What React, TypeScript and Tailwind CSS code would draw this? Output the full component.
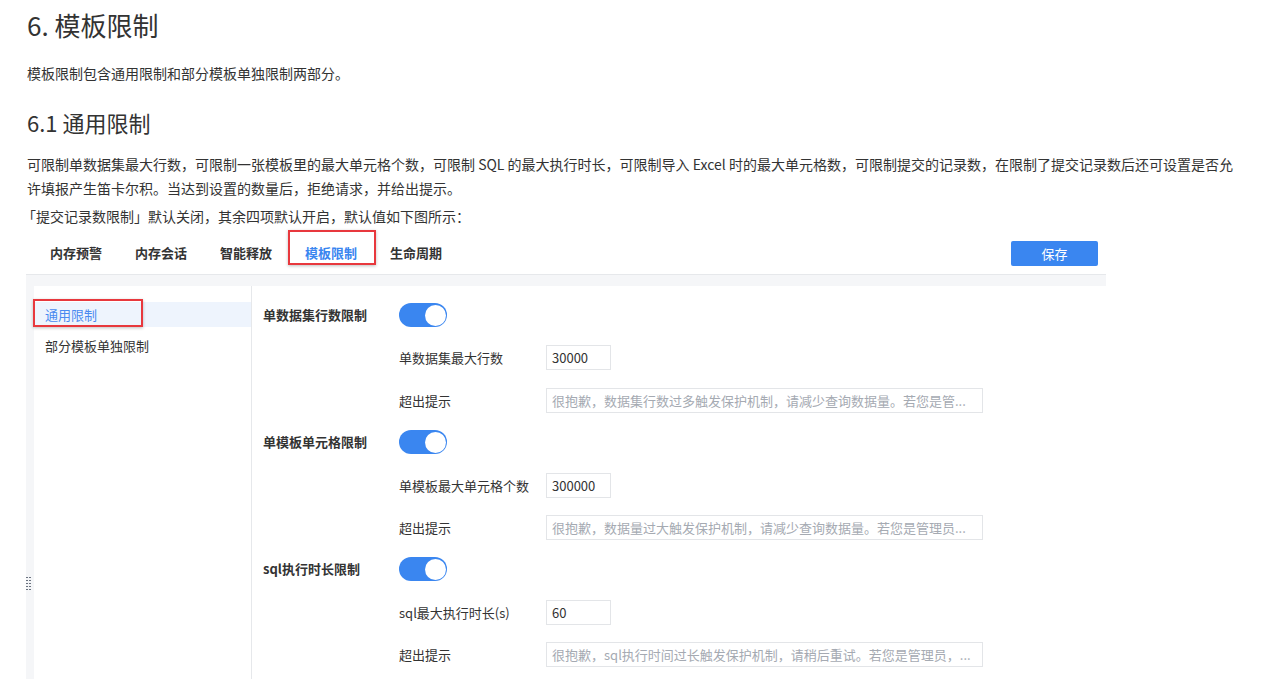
import React from 'react';

const font = "font-['Noto_Sans_CJK_SC','Noto_Sans',sans-serif]";

interface Group {
  title: string;
  label: string;
  value: string;
  tip: string;
}

const groups: Group[] = [
  {
    title: '单数据集行数限制',
    label: '单数据集最大行数',
    value: '30000',
    tip: '很抱歉，数据集行数过多触发保护机制，请减少查询数据量。若您是管...',
  },
  {
    title: '单模板单元格限制',
    label: '单模板最大单元格个数',
    value: '300000',
    tip: '很抱歉，数据量过大触发保护机制，请减少查询数据量。若您是管理员...',
  },
  {
    title: 'sql执行时长限制',
    label: 'sql最大执行时长(s)',
    value: '60',
    tip: '很抱歉，sql执行时间过长触发保护机制，请稍后重试。若您是管理员，...',
  },
];

const Toggle = () => (
  <div className="relative w-[48px] h-[24px] rounded-full bg-[#3a86f0]">
    <div className="absolute right-[1px] top-[1.5px] w-[21px] h-[21px] rounded-full bg-white" />
  </div>
);

const RedBox = ({ className }: { className: string }) => (
  <div
    className={`absolute border-2 border-[#e8383d] shadow-[0_1px_3px_rgba(0,0,0,0.25)] pointer-events-none ${className}`}
  />
);

const tabs = ['内存预警', '内存会话', '智能释放', '模板限制', '生命周期'];

const SettingsShot = () => (
  <div className="ml-[26px] w-[1080px] bg-[#f5f6f8]">
    {/* tab bar */}
    <div className="h-[40px] bg-white border-b border-[#e6e8eb] flex items-center pl-[24px] pr-[8px] pb-[3px]">
      {tabs.map((t) => (
        <div
          key={t}
          className={`relative mr-[33px] text-[13px] font-bold leading-[20px] ${
            t === '模板限制' ? 'text-[#3a86f0]' : 'text-[#333]'
          }`}
        >
          {t}
          {t === '模板限制' && <RedBox className="-left-[17px] -top-[13px] w-[88px] h-[35px]" />}
        </div>
      ))}
      <button className="ml-auto w-[87px] h-[25px] rounded-[2px] bg-[#3a86f0] text-white text-[13px] leading-[25px]">
        保存
      </button>
    </div>

    <div className="flex pt-[11px]">
      {/* left grip strip */}
      <div className="w-[8px] shrink-0 pt-[291px]">
        <svg width="6" height="13" viewBox="0 0 6 13">
          {[0, 3, 6, 9, 12].map((y) => (
            <g key={y}>
              <rect x="0" y={y} width="2" height="1" fill="#6b7380" />
              <rect x="3" y={y} width="2" height="1" fill="#6b7380" />
            </g>
          ))}
        </svg>
      </div>

      {/* left menu */}
      <div className="w-[218px] shrink-0 bg-white border-r border-[#e6e8eb] pt-[16px] h-[420px]">
        <div className="relative h-[25px] bg-[#eef4fd] pl-[11px] text-[13px] leading-[25px] text-[#4a8af0]">
          通用限制
          <RedBox className="-left-[1px] -top-[3px] w-[110px] h-[28px]" />
        </div>
        <div className="mt-[6px] h-[26px] pl-[11px] text-[13px] leading-[26px] text-[#333]">
          部分模板单独限制
        </div>
      </div>

      {/* right form */}
      <div className="flex-1 bg-white pl-[11px] pt-[17px]">
        {groups.map((g) => (
          <div key={g.title}>
            <div className="flex items-start h-[42.4px]">
              <div className="w-[136px] text-[13px] font-bold leading-[24px] text-[#333]">{g.title}</div>
              <Toggle />
            </div>
            <div className="flex items-start h-[42.4px] pl-[136px]">
              <div className="w-[147px] text-[13px] leading-[25px] text-[#333]">{g.label}</div>
              <div className="w-[65px] h-[25px] border border-[#e3e5e8] pl-[5px] text-[13px] leading-[23px] text-[#333]">
                {g.value}
              </div>
            </div>
            <div className="flex items-start h-[42.4px] pl-[136px]">
              <div className="w-[147px] text-[13px] leading-[25px] text-[#333]">超出提示</div>
              <div className="w-[437px] h-[25px] border border-[#e3e5e8] pl-[5px] text-[13px] leading-[23px] text-[#a5aab2] whitespace-nowrap overflow-hidden">
                {g.tip}
              </div>
            </div>
          </div>
        ))}
      </div>
    </div>
  </div>
);

export default function App() {
  return (
    <div className={`${font} bg-white text-[#333] h-[679px] overflow-hidden`}>
      <div className="pl-[27px]">
        <h1 className="pt-[8px] text-[26px] leading-[34px] font-normal">6. 模板限制</h1>
        <p className="mt-[19px] text-[14px] leading-[24px]">模板限制包含通用限制和部分模板单独限制两部分。</p>
        <h2 className="mt-[22px] text-[22px] leading-[30px] font-normal">6.1 通用限制</h2>
        <p className="mt-[15px] text-[14px] leading-[24px] whitespace-nowrap">
          可限制单数据集最大行数，可限制一张模板里的最大单元格个数，可限制 SQL 的最大执行时长，可限制导入 Excel 时的最大单元格数，可限制提交的记录数，在限制了提交记录数后还可设置是否允
          <br />
          许填报产生笛卡尔积。当达到设置的数量后，拒绝请求，并给出提示。
        </p>
        <p className="mt-[4px] -ml-[5px] text-[14px] leading-[24px]">「提交记录数限制」默认关闭，其余四项默认开启，默认值如下图所示：</p>
      </div>
      <div className="mt-[7px]">
        <SettingsShot />
      </div>
    </div>
  );
}
